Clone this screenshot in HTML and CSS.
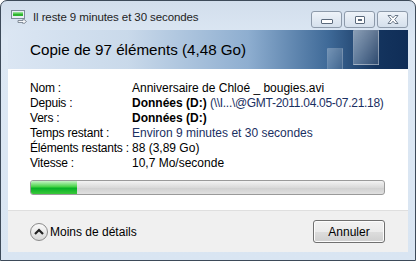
FILE: index.html
```html
<!DOCTYPE html>
<html lang="fr">
<head>
    <meta charset="UTF-8">
    <title>Il reste 9 minutes et 30 secondes</title>
    <link rel="stylesheet" href="styles.css">
</head>
<body>
    <div class="fenetre">
        <div class="barre-titre">
            <svg class="icone" width="16" height="14" viewBox="0 0 16 14">
                <rect x="0.5" y="0.5" width="13" height="8" fill="#e8eef4" stroke="#7d8a99"/>
                <rect x="2" y="2" width="10" height="4" fill="#2fb52f"/>
                <rect x="2" y="2" width="10" height="1.5" fill="#8fe28f"/>
                <path d="M7 10.5 h5 v-2 l3.5 3 l-3.5 3 v-2 h-5 z" fill="#f4f6f8" stroke="#6c7784" stroke-width="0.8"/>
            </svg>
            <span class="titre">Il reste 9 minutes et 30 secondes</span>
            <div class="controles">
                <div class="ctrl"><span class="min"></span></div>
                <div class="ctrl"><span class="max"></span></div>
                <div class="ctrl fermer">
                    <svg width="12" height="9" viewBox="0 0 12 9">
                        <path d="M1 0.5 h3 l2 2.3 l2 -2.3 h3 l-3.3 4 l3.3 4 h-3 l-2 -2.3 l-2 2.3 h-3 l3.3 -4 z" fill="#fff" stroke="#5b6a7c" stroke-width="0.9"/>
                    </svg>
                </div>
            </div>
        </div>

        <div class="client">
            <div class="entete">
                <span>Copie de 97 éléments (4,48 Go)</span>
                <div class="vitre vitre-a"></div>
                <div class="vitre vitre-b"></div>
            </div>

            <div class="contenu">
                <div class="infos">
                    <span class="etiquette">Nom :</span><span>Anniversaire de Chloé _ bougies.avi</span>
                    <span class="etiquette">Depuis :</span><span><b>Données (D:)</b> <span class="bleu serre">(\\I...\@GMT-2011.04.05-07.21.18)</span></span>
                    <span class="etiquette">Vers :</span><span><b>Données (D:)</b></span>
                    <span class="etiquette">Temps restant :</span><span class="bleu">Environ 9 minutes et 30 secondes</span>
                    <span class="etiquette">Éléments restants :</span><span>88 (3,89 Go)</span>
                    <span class="etiquette">Vitesse :</span><span>10,7 Mo/seconde</span>
                </div>
                <div class="progression">
                    <div class="rempli" style="width: 13%"></div>
                </div>
            </div>

            <div class="pied">
                <div class="details">
                    <span class="rond">
                        <svg width="10" height="7" viewBox="0 0 10 7"><path d="M1 6 L5 2 L9 6" fill="none" stroke="#222" stroke-width="2.2"/></svg>
                    </span>
                    <span>Moins de détails</span>
                </div>
                <button class="bouton">Annuler</button>
            </div>
        </div>
    </div>
</body>
</html>
```

FILE: styles.css
```css
body { margin: 0; font-family: 'Liberation Sans', Arial, sans-serif; font-size: 12px; }

.fenetre {
    width: 416px;
    height: 261px;
    box-sizing: border-box;
    border: 1px solid #3d4a59;
    border-radius: 7px 7px 0 0;
    background: linear-gradient(to bottom, #d2deec 0px, #dde8f4 40px, #d9e5f2 100%);
    padding: 0 7px 8px 7px;
    display: flex;
    flex-direction: column;
}

.barre-titre {
    height: 29px;
    display: flex;
    align-items: center;
    padding-left: 3px;
    color: #1e1e1e;
}

.icone { margin-right: 6px; margin-top: 3px; }

.titre { flex: 1; margin-top: 3px; font-size: 11.5px; letter-spacing: -0.1px; }

.controles {
    display: flex;
    gap: 2px;
    align-self: flex-start;
    margin-top: 10px;
}

.ctrl {
    width: 29px;
    height: 15px;
    border: 1px solid #8d9aaa;
    border-radius: 3px;
    background: linear-gradient(to bottom, #eef3f9, #d5e0ec);
    display: flex;
    align-items: center;
    justify-content: center;
}

.min {
    width: 10px;
    height: 3px;
    margin-top: 3px;
    background: #fff;
    border: 1px solid #5b6a7c;
    border-radius: 1px;
}

.max {
    width: 8px;
    height: 6px;
    background: #fff;
    border: 1px solid #5b6a7c;
    box-shadow: inset 0 0 0 2px #fff, inset 0 0 0 3px #5b6a7c;
    border-radius: 1px;
}

.client {
    flex: 1;
    display: flex;
    flex-direction: column;
    background: #fff;
}

.entete {
    height: 39px;
    position: relative;
    overflow: hidden;
    display: flex;
    align-items: center;
    padding-left: 22px;
    font-size: 15.2px;
    color: #000;
    background: linear-gradient(to right, #dbe6f3 0%, #c9d9ea 30%, #8eaed0 60%, #3f6a98 80%, #14345e 92%, #0f2d57 100%);
}

.vitre {
    position: absolute;
    background: linear-gradient(135deg, rgba(255,255,255,0.45), rgba(255,255,255,0.12));
    border: 1px solid rgba(255,255,255,0.25);
}

.vitre-a { left: 345px; top: 0; width: 24px; height: 33px; }
.vitre-b { left: 319px; top: 18px; width: 14px; height: 21px; opacity: 0.6; }

.contenu {
    flex: 1;
    padding: 12px 23px 0 22px;
}

.infos {
    display: grid;
    grid-template-columns: 102px 1fr;
    line-height: 15px;
    color: #000;
    white-space: nowrap;
}

.etiquette { letter-spacing: -0.2px; }

.bleu { color: #1a2f62; }

.serre { letter-spacing: -0.3px; }

.progression {
    margin-top: 9px;
    height: 13px;
    border: 1px solid #9a9a9a;
    border-radius: 3px;
    background: linear-gradient(to bottom, #f3f3f3, #dadada 50%, #cfcfcf 51%, #e0e0e0);
    overflow: hidden;
}

.rempli {
    height: 100%;
    background: linear-gradient(to bottom, #c6f3c6, #44d244 45%, #06b025 55%, #3ac83a);
}

.pied {
    height: 42px;
    box-sizing: border-box;
    border-top: 1px solid #dfdfdf;
    background: #f0f0f0;
    display: flex;
    align-items: center;
    justify-content: space-between;
    padding: 0 23px 0 22px;
}

.details { display: flex; align-items: center; gap: 2px; color: #000; }

.rond {
    width: 16px;
    height: 16px;
    border: 1px solid #8a8a8a;
    border-radius: 50%;
    background: linear-gradient(to bottom, #fafafa, #d8d8d8);
    display: flex;
    align-items: center;
    justify-content: center;
}

.bouton {
    width: 72px;
    height: 23px;
    font-family: inherit;
    font-size: 12px;
    color: #000;
    border: 1px solid #707070;
    border-radius: 3px;
    background: linear-gradient(to bottom, #f2f2f2 0%, #ebebeb 50%, #dddddd 51%, #cfcfcf 100%);
    box-shadow: inset 0 0 0 1px #fcfcfc;
}
```
